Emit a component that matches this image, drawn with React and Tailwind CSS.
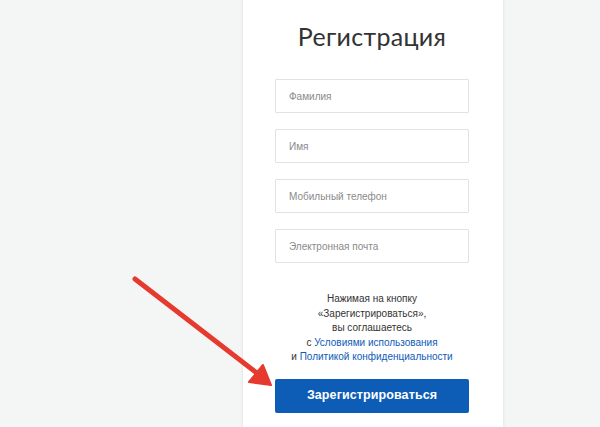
export default function App() {
  const inputs = ["Фамилия", "Имя", "Мобильный телефон", "Электронная почта"];
  return (
    <div className="relative w-[600px] h-[427px] overflow-hidden bg-[#f4f6f6]" style={{ fontFamily: "Arial, 'Liberation Sans', sans-serif" }}>
      <div className="ml-[243px] w-[260px] h-[427px] bg-white shadow-[0_0_3px_rgba(0,0,0,0.12)] flex flex-col items-start pl-[32px]">
        <h1 className="self-center mr-[34px] mt-[18px] text-[25px] leading-[36px] text-[#333] font-['Lato',sans-serif] tracking-[0.3px]">Регистрация</h1>
        <div className="mt-[25px] flex flex-col gap-[16px]">
          {inputs.map((p) => (
            <div key={p} className="w-[194px] h-[34px] border border-[#dfe3e6] rounded-[1px] flex items-center pl-[13px] text-[10px] text-[#8a8a8a]">
              {p}
            </div>
          ))}
        </div>
        <div className="w-[194px] mt-[29px] text-center text-[10px] leading-[14.5px] text-[#333]">
          <div>Нажимая на кнопку</div>
          <div>«Зарегистрироваться»,</div>
          <div>вы соглашаетесь</div>
          <div>с <span className="text-[#0d5cb6]">Условиями использования</span></div>
          <div>и <span className="text-[#0d5cb6]">Политикой конфиденциальности</span></div>
        </div>
        <button className="mt-[14px] w-[194px] h-[34px] rounded-[2px] bg-[#0d5cb6] text-white text-[12.5px] font-bold tracking-[0.1px]">
          Зарегистрироваться
        </button>
      </div>
      <svg className="absolute left-0 top-0 pointer-events-none" width="600" height="427" viewBox="0 0 600 427">
        <line x1="135" y1="279" x2="258" y2="374" stroke="#e63a2e" strokeWidth="5" strokeLinecap="round" />
        <polygon points="271,385 263,365 249,382" fill="#e63a2e" stroke="#e63a2e" strokeWidth="2" strokeLinejoin="round" />
      </svg>
    </div>
  );
}
